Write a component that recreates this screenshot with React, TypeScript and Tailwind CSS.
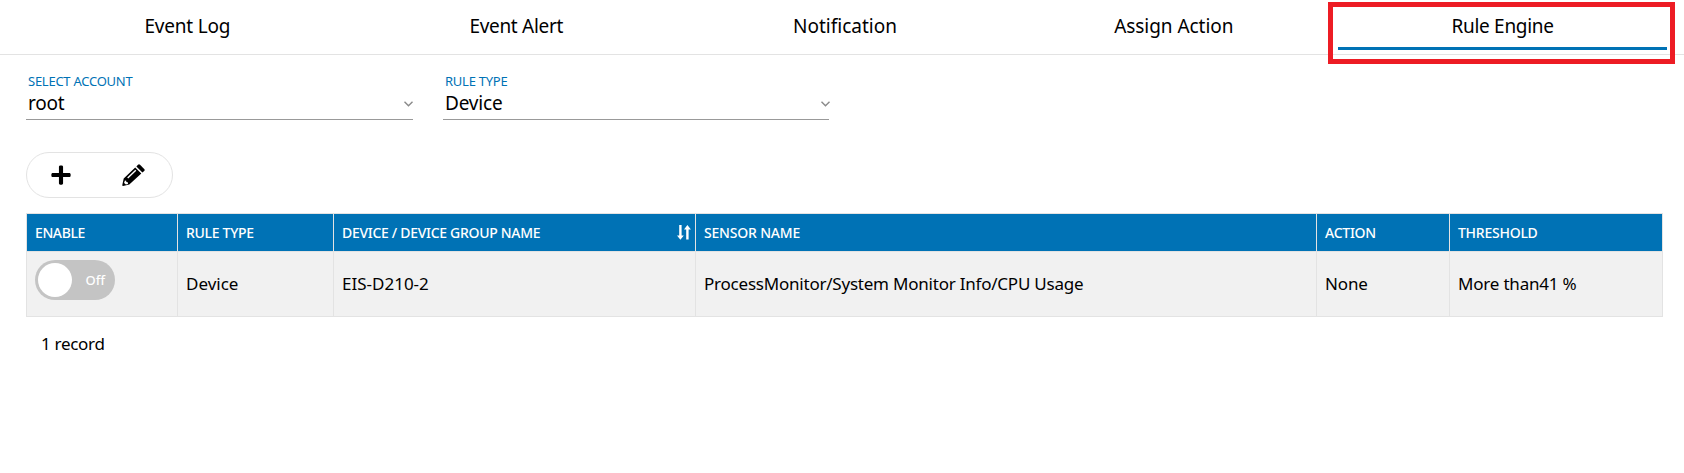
import type { ReactNode } from "react";
import { FaPlus } from "react-icons/fa";

const tabs = [
  { label: "Event Log", active: false, spacing: "tracking-[-0.2px]" },
  { label: "Event Alert", active: false, spacing: "tracking-[-0.3px]" },
  { label: "Notification", active: false, spacing: "tracking-normal" },
  { label: "Assign Action", active: false, spacing: "tracking-[-0.05px]" },
  { label: "Rule Engine", active: true, spacing: "tracking-[-0.3px]" },
];

function PencilIcon() {
  return (
    <svg width="23" height="22" viewBox="0 0 23 22">
      <path
        fill="#000"
        d="M14.4 2.4 16 .8Q17 -.1 18 .8L22.2 4.9Q23.2 5.9 22.2 6.9L20.4 8.5Z"
      />
      <path
        fill="#000"
        fillRule="evenodd"
        d="M13.2 3.5 19.3 9.6 7.3 20.6 1 21.9Q.1 22 .3 21.1L1.7 14.6ZM2.9 16.6 2.1 19 3.9 20.6 6 19.9 5.8 18.2 4.3 18 4.2 16.7ZM13.3 5.7 5.2 13.5 6.2 14.6 14.3 6.8Z"
      />
    </svg>
  );
}

function SortIcon() {
  return (
    <svg width="14" height="15" viewBox="0 0 14 15" fill="#fff">
      <path d="M2.2 0H4.6V10.4H6.8L3.4 14.8 0 10.4H2.2Z" />
      <path d="M9.2 14.6H11.6V4.4H13.9L10.4 0 7 4.4H9.2Z" />
    </svg>
  );
}

function SelectField({ label, value, width }: { label: string; value: string; width: string }) {
  return (
    <div className={`h-[45px] border-b border-[#999999] pl-[2px] ${width}`}>
      <div className="-mt-px h-[14px] text-[13px] leading-[14px] tracking-[-0.25px] text-[#0072b5]">
        <span>{label}</span>
      </div>
      <div className="flex h-[31px] w-[385px] items-center justify-between text-[19px] leading-[31px] tracking-[-0.2px]">
        <span>{value}</span>
        <svg width="9" height="6" viewBox="0 0 9 6" fill="none" stroke="#8a8a8a" strokeWidth="1.4">
          <path d="M0.5 0.7 4.5 4.7 8.5 0.7" />
        </svg>
      </div>
    </div>
  );
}

function Head({ children, spacing = "tracking-[-0.3px]" }: { children: ReactNode; spacing?: string }) {
  return (
    <div
      className={`flex items-center justify-between border-r border-b border-[#e3e3e3] bg-[#0072b5] pr-1 pl-2 text-[14px] font-medium text-white ${spacing}`}
    >
      {children}
    </div>
  );
}

function Cell({ children, spacing = "tracking-normal" }: { children: ReactNode; spacing?: string }) {
  return (
    <div className={`flex items-center border-r border-b border-[#e3e3e3] bg-[#f1f1f1] pl-2 text-[17px] ${spacing}`}>
      {children}
    </div>
  );
}

export default function App() {
  return (
    <div className="h-[473px] w-[1684px] overflow-hidden bg-white font-['Noto_Sans',sans-serif] text-black">
      <nav className="flex h-[55px] border-b border-[#e3e3e3] pr-[17px] pl-[23px]">
        {tabs.map((t) => (
          <div key={t.label} className="relative flex h-[50px] flex-1 flex-col text-center text-[19px]">
            <span className={`flex-1 pt-[3px] leading-[47px] ${t.spacing}`}>
              <span>{t.label}</span>
            </span>
            {t.active && <div className="absolute inset-x-0 bottom-0 h-[3px] bg-[#0072b5]" />}
            {t.active && (
              <div className="absolute top-[2px] -left-[10px] h-[62px] w-[347px] border-[5px] border-[#ed1c24]" />
            )}
          </div>
        ))}
      </nav>

      <div className="flex gap-[30px] pt-5 pl-[26px]">
        <SelectField label="SELECT ACCOUNT" value="root" width="w-[387px]" />
        <SelectField label="RULE TYPE" value="Device" width="w-[386px]" />
      </div>

      <div className="mt-8 ml-[26px] flex h-[46px] w-[147px] items-center rounded-full border border-[#e3e3e3]">
        <div className="flex w-[68px] justify-center pb-px">
          <FaPlus size={22} />
        </div>
        <div className="flex w-[77px] justify-center">
          <PencilIcon />
        </div>
      </div>

      <div className="mt-[15px] ml-[26px] grid w-[1637px] grid-cols-[151px_156px_362px_621px_133px_213px] grid-rows-[38px_65px] border-t border-l border-[#e3e3e3]">
        <Head spacing="tracking-[-0.4px]"><span>ENABLE</span></Head>
        <Head><span>RULE TYPE</span></Head>
        <Head>
          <span>DEVICE / DEVICE GROUP NAME</span>
          <SortIcon />
        </Head>
        <Head spacing="tracking-[-0.2px]"><span>SENSOR NAME</span></Head>
        <Head spacing="tracking-[-0.25px]"><span>ACTION</span></Head>
        <Head spacing="tracking-[-0.25px]"><span>THRESHOLD</span></Head>
        <Cell>
          <div className="mb-2 flex h-10 w-20 items-center justify-between rounded-full bg-[#c4c4c4] pr-[10px] pl-[3px]">
            <div className="size-[34px] rounded-full bg-white" />
            <span className="pt-px text-[13px] font-medium text-white">Off</span>
          </div>
        </Cell>
        <Cell><span>Device</span></Cell>
        <Cell><span>EIS-D210-2</span></Cell>
        <Cell spacing="tracking-[-0.22px]"><span>ProcessMonitor/System Monitor Info/CPU Usage</span></Cell>
        <Cell spacing="tracking-[-0.15px]"><span>None</span></Cell>
        <Cell spacing="tracking-[-0.2px]"><span>More than41 %</span></Cell>
      </div>

      <div className="mt-[14px] ml-[41px] text-[17px] leading-[26px] tracking-[-0.3px]">1 record</div>
    </div>
  );
}
